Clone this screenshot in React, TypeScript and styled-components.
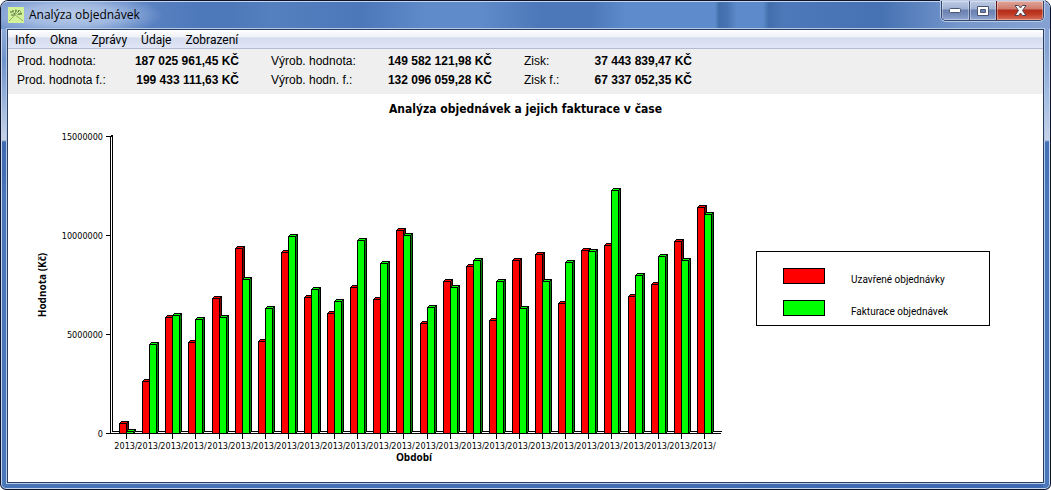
import React from "react";
import styled, { createGlobalStyle } from "styled-components";

const GlobalStyle = createGlobalStyle`
  *, *::before, *::after { box-sizing: border-box; }
  body { margin: 0; background: #fff; }
`;

const uiFont = `"Open Sans", "Noto Sans", sans-serif`;
const labelFont = `Roboto, "Open Sans", sans-serif`;
const chartFont = `"DejaVu Sans Condensed", "DejaVu Sans", sans-serif`;

const Frame = styled.div`
  min-height: 100vh;
  display: flex;
  flex-direction: column;
  border: 1px solid #10142a;
  border-radius: 8px 8px 6px 6px;
  padding: 0 6px 6px;
  box-shadow: inset 0 0 0 1px #c3d6ee;
  background:
    linear-gradient(180deg, #8fabd8 28px, #6f93cc 60px, #8fabd8 90px, #c8d2e6 139px, #3f68b0 141px, #4a76ba 200px) left / 7px 100% no-repeat,
    linear-gradient(180deg, #88a4d3 28px, #88a4d3 50px, #a5bfe3 100px, #c8d2e6 139px, #4470b6 141px, #4a76ba 200px) right / 7px 100% no-repeat,
    linear-gradient(90deg, #4a74b8, #3e69b0);
`;

const TitleBar = styled.header`
  display: flex;
  align-items: flex-start;
  height: 28px;
  margin: 0 -6px;
  padding: 0 6px 0 7px;
  border-top: 1px solid #c3d6ee;
  border-radius: 7px 7px 0 0;
  background:
    radial-gradient(ellipse 92px 22px at 70px 13px, rgba(200, 215, 238, 0.85), rgba(185, 204, 234, 0.7) 50%, rgba(150, 178, 222, 0)),
    linear-gradient(90deg,
      #6f92cc 0, #5b83c4 140px, #4d78b9 200px, #4d78b9 230px, #5480c0 270px,
      #4c77b9 360px, #5f8bcb 425px, #5f8bcb 480px, #4c78b9 540px, #4c78b9 590px,
      #5e8bcb 625px, #5e8bcb 714px, #426eac 718px, #4874b4 726px, #5d8aca 736px,
      #5d8aca 762px, #426eac 768px, #4d79bb 782px, #4672b3 880px, #7697cc 960px, #86a2d2 100%);
`;

const Title = styled.h1`
  flex: 1;
  display: flex;
  align-items: center;
  gap: 5px;
  height: 26px;
  margin: 0;
  color: #000;
  font: 400 12px/16px ${uiFont};
`;

const WindowControls = styled.div`
  display: flex;
  margin-top: -1px;
  border: 1px solid #35466e;
  border-top: 0;
  border-radius: 0 0 5px 5px;
  overflow: hidden;
  box-shadow: 0 0 0 1px #b9cbe6;
`;

const ControlButton = styled.button<{ $danger?: boolean }>`
  display: flex;
  align-items: center;
  justify-content: center;
  width: ${(p) => (p.$danger ? 47 : 27)}px;
  height: 19px;
  padding: 0;
  border: 0;
  border-left: 1px solid ${(p) => (p.$danger ? "#5c1719" : "#44567f")};
  background: ${(p) =>
    p.$danger
      ? "linear-gradient(180deg, #e0a79c 0, #cf7a6c 8px, #b32d1c 9px, #bf3a22 13px, #d9705a 19px)"
      : "linear-gradient(180deg, #c0cce4 0, #9fb1d4 8px, #6a82b1 9px, #7389b8 13px, #93a9d2 19px)"};
  box-shadow: inset 0 0 0 1px rgba(255, 255, 255, 0.35);
  &:first-child { border-left: 0; }
`;

const Client = styled.main`
  flex: 1;
  display: flex;
  flex-direction: column;
  border: 1px solid #2b3c60;
  outline: 1px solid #b4cbe8;
  background: #fff;
`;

const MenuBar = styled.nav`
  display: flex;
  height: 19px;
  border-bottom: 1px solid #b3bcd4;
  background: linear-gradient(180deg, #fff 0, #eef1f8 7px, #d5dcee 8px, #e0e6f5 18px);
`;

const MenuItem = styled.button`
  padding: 0 7px;
  border: 0;
  background: none;
  color: #000;
  font: 400 12px/20px ${labelFont};
`;

const Summary = styled.section`
  display: grid;
  grid-template-columns: 222px 221px 168px;
  column-gap: 32px;
  padding: 3px 9px 4px;
  background: #efefef;
`;

const SummaryGroup = styled.dl`
  margin: 0;
  font: 400 12px/19px "Liberation Sans", Arial, sans-serif;
`;

const SummaryRow = styled.div`
  display: flex;
  justify-content: space-between;
  white-space: nowrap;
  dd { margin: 0; font-weight: 700; }
`;

const ChartTitle = styled.h2`
  margin: 0;
  padding: 6px 0 2px;
  text-align: center;
  font: 700 12px/18px ${chartFont};
`;

const ChartArea = styled.section`
  display: flex;
  align-items: flex-start;
  gap: 28px;
`;

const Plot = styled.svg`
  flex: none;
  display: block;
  font: 400 9px ${chartFont};
`;

const Legend = styled.ul`
  display: grid;
  gap: 16px;
  width: 234px;
  margin: 131px 0 0;
  padding: 16px 26px 9px;
  border: 1px solid #000;
  list-style: none;
`;

const LegendItem = styled.li`
  display: flex;
  gap: 26px;
  height: 16px;
  font: 400 10px/23px ${labelFont};
  white-space: nowrap;
`;

const Swatch = styled.span<{ $color: string }>`
  width: 42px;
  height: 16px;
  border: 1px solid #000;
  background: ${(p) => p.$color};
`;

const summary = [
  [["Prod. hodnota:", "187 025 961,45 KČ"], ["Prod. hodnota f.:", "199 433 111,63 KČ"]],
  [["Výrob. hodnota:", "149 582 121,98 KČ"], ["Výrob. hodn. f.:", "132 096 059,28 KČ"]],
  [["Zisk:", "37 443 839,47 KČ"], ["Zisk f.:", "67 337 052,35 KČ"]],
];

// Closed and invoiced orders per period, in millions of Kč.
const periods: [number, number][] = [
  [0.51, 0.1], [2.63, 4.49], [5.86, 5.96], [4.6, 5.76], [6.82, 5.86], [9.34, 7.78],
  [4.65, 6.31], [9.14, 9.95], [6.87, 7.27], [6.06, 6.67], [7.37, 9.75], [6.77, 8.59],
  [10.25, 10.0], [5.56, 6.36], [7.68, 7.37], [8.43, 8.74], [5.71, 7.68], [8.74, 6.31],
  [9.04, 7.68], [6.57, 8.64], [9.24, 9.19], [9.49, 12.27], [6.92, 7.98], [7.53, 8.94],
  [9.7, 8.74], [11.41, 11.06],
];

const AXIS_X = 102;
const BASE_Y = 313;
const PX_PER_MILLION = 19.8;
const BAR = 7;
const DEPTH = 2;

const periodX = (i: number) => Math.floor(118.56 + (i * 208) / 9);

const Bar = ({ x, value, face, side }: { x: number; value: number; face: string; side: string }) => {
  const h = Math.round(value * PX_PER_MILLION);
  const y = BASE_Y - h;
  return (
    <g stroke="#000">
      <path d={`M${x} ${y}l${DEPTH} ${-DEPTH}h${BAR}l${-DEPTH} ${DEPTH}z`} fill={face} />
      <path d={`M${x + BAR} ${y}l${DEPTH} ${-DEPTH}v${h}l${-DEPTH} ${DEPTH}z`} fill={side} />
      <rect x={x} y={y} width={BAR} height={h} fill={face} />
    </g>
  );
};

const Chart = () => (
  <Plot width="720" height="346" viewBox="0 0 720 346" role="img" aria-label="Analýza objednávek">
    <g transform="translate(.5 .5)" fill="none" stroke="#000" shapeRendering="crispEdges">
      <path d={`M${AXIS_X} ${BASE_Y}V16l2-1V${BASE_Y - 2}H713M${AXIS_X} ${BASE_Y}H712`} />
      {[0, 5, 10, 15].map((m) => (
        <path key={m} d={`M${AXIS_X - 5} ${BASE_Y - m * PX_PER_MILLION}h5`} />
      ))}
      {periods.map(([closed, invoiced], i) => {
        const x = periodX(i);
        return (
          <g key={i}>
            <path d={`M${x} ${BASE_Y}v5`} />
            <Bar x={x - BAR} value={closed} face="#f00" side="#800000" />
            <Bar x={x} value={invoiced} face="#0f0" side="#008000" />
          </g>
        );
      })}
    </g>
    <g textAnchor="end">
      {[0, 5, 10, 15].map((m) => (
        <text key={m} x={AXIS_X - 7} y={BASE_Y + 4 - m * PX_PER_MILLION}>{m * 1000000}</text>
      ))}
    </g>
    <g textAnchor="middle">
      {periods.map((_, i) => (
        <text key={i} x={periodX(i)} y={BASE_Y + 16}>2013/</text>
      ))}
      <g fontFamily="Open Sans, Noto Sans, sans-serif" fontSize="10" fontWeight="700">
        <text x="406" y={BASE_Y + 28}>Období</text>
        <text transform="translate(38 165) rotate(-90)">Hodnota (Kč)</text>
      </g>
    </g>
  </Plot>
);

const AppIcon = () => (
  <svg width="16" height="16" viewBox="0 0 16 16" aria-hidden="true">
    <rect width="16" height="16" fill="#d3f29a" />
    <path d="M1 14 7 8l3 2 5 4M7 8 4 4M7 8 8 2M8 7l4-4M9 8l5-2" fill="none" stroke="#8fae66" />
    <path d="M2 5h2M5 3v2M8 3v2M11 3l-1 2M3 8h3M10 7h4M6 6l1 1M12 5h1" fill="none" stroke="#4d6638" />
  </svg>
);

export default function App() {
  return (
    <Frame>
      <GlobalStyle />
      <TitleBar>
        <Title><AppIcon />Analýza objednávek</Title>
        <WindowControls>
          <ControlButton aria-label="Minimalizovat">
            <svg width="13" height="7" viewBox="0 0 13 7"><rect x=".5" y="1.5" width="11" height="4" rx="1" fill="#fff" stroke="#4b5673" /></svg>
          </ControlButton>
          <ControlButton aria-label="Maximalizovat">
            <svg width="12" height="10" viewBox="0 0 12 10"><path d="M.5.5h11v9H.5zM3.5 3.5v3h5v-3z" fill="#fff" fillRule="evenodd" stroke="#4b5673" /></svg>
          </ControlButton>
          <ControlButton $danger aria-label="Zavřít">
            <svg width="13" height="11" viewBox="0 0 13 11"><path d="M1 .5h3.500L6.500 3l2-2.500H12L8.500 5.500l3.500 5H8.500l-2-2.500-2 2.500H1l3.500-5z" fill="#fff" stroke="#4b4455" /></svg>
          </ControlButton>
        </WindowControls>
      </TitleBar>
      <Client>
        <MenuBar>
          {["Info", "Okna", "Zprávy", "Údaje", "Zobrazení"].map((m) => <MenuItem key={m}>{m}</MenuItem>)}
        </MenuBar>
        <Summary>
          {summary.map((group, i) => (
            <SummaryGroup key={i}>
              {group.map(([label, value]) => (
                <SummaryRow key={label}><dt>{label}</dt><dd>{value}</dd></SummaryRow>
              ))}
            </SummaryGroup>
          ))}
        </Summary>
        <ChartTitle>Analýza objednávek a jejich fakturace v čase</ChartTitle>
        <ChartArea>
          <Chart />
          <Legend>
            <LegendItem><Swatch $color="#f00" />Uzavřené objednávky</LegendItem>
            <LegendItem><Swatch $color="#0f0" />Fakturace objednávek</LegendItem>
          </Legend>
        </ChartArea>
      </Client>
    </Frame>
  );
}
